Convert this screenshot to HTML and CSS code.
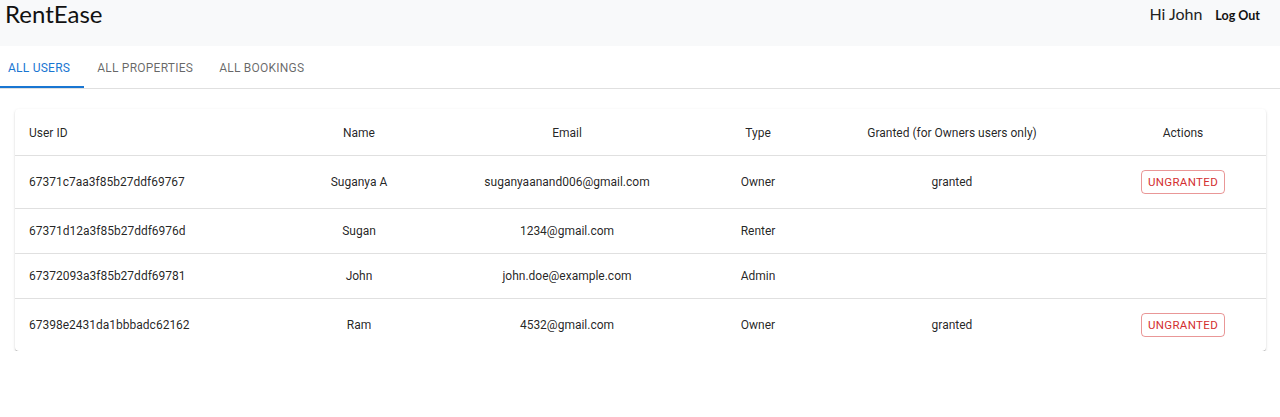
FILE: index.html
```html
<!DOCTYPE html>
<html>
<head>
<meta charset="utf-8">
<link rel="stylesheet" href="styles.css">
</head>
<body>
<header class="navbar">
  <div class="brand">RentEase</div>
  <div class="nav-right">
    <span class="greet">Hi John</span>
    <span class="logout">Log Out</span>
  </div>
</header>
<nav class="tabs">
  <div class="tab active">All Users</div>
  <div class="tab">All Properties</div>
  <div class="tab">All Bookings</div>
</nav>
<main class="content">
  <div class="card">
    <table class="users">
      <colgroup>
        <col class="c1"><col class="c2"><col class="c3"><col class="c4"><col class="c5"><col class="c6">
      </colgroup>
      <thead>
        <tr>
          <th class="left">User ID</th>
          <th>Name</th>
          <th>Email</th>
          <th>Type</th>
          <th>Granted (for Owners users only)</th>
          <th>Actions</th>
        </tr>
      </thead>
      <tbody>
        <tr>
          <td class="left">67371c7aa3f85b27ddf69767</td>
          <td>Suganya A</td>
          <td>suganyaanand006@gmail.com</td>
          <td>Owner</td>
          <td>granted</td>
          <td><button class="btn-ungrant">Ungranted</button></td>
        </tr>
        <tr>
          <td class="left">67371d12a3f85b27ddf6976d</td>
          <td>Sugan</td>
          <td>1234@gmail.com</td>
          <td>Renter</td>
          <td></td>
          <td></td>
        </tr>
        <tr>
          <td class="left">67372093a3f85b27ddf69781</td>
          <td>John</td>
          <td>john.doe@example.com</td>
          <td>Admin</td>
          <td></td>
          <td></td>
        </tr>
        <tr class="last">
          <td class="left">67398e2431da1bbbadc62162</td>
          <td>Ram</td>
          <td>4532@gmail.com</td>
          <td>Owner</td>
          <td>granted</td>
          <td><button class="btn-ungrant">Ungranted</button></td>
        </tr>
      </tbody>
    </table>
  </div>
</main>
</body>
</html>
```
FILE: styles.css
```css
* { box-sizing: border-box; }
html, body { margin: 0; padding: 0; background: #fff; }
body { font-family: Roboto, "Liberation Sans", sans-serif; color: rgba(0,0,0,0.87); }

.navbar {
  height: 46px;
  background: #f8f9fa;
  display: flex;
  align-items: flex-start;
  justify-content: space-between;
  padding: 0 20px 0 5px;
}
.brand {
  font-family: Lato, "Open Sans", sans-serif;
  font-size: 24px;
  line-height: 28px;
  color: #111;
}
.nav-right {
  display: flex;
  align-items: baseline;
  gap: 13px;
  padding-top: 4px;
}
.greet {
  font-family: Lato, sans-serif;
  font-size: 16px;
  color: #222;
}
.logout {
  font-family: Lato, sans-serif;
  font-size: 12.5px;
  font-weight: 700;
  color: #111;
}

.tabs {
  display: flex;
  height: 43px;
  border-bottom: 1px solid #e0e0e0;
}
.tab {
  display: flex;
  align-items: center;
  padding: 2px 13px 0;
  font-size: 12px;
  font-weight: 400;
  text-transform: uppercase;
  letter-spacing: 0.02em;
  color: rgba(0,0,0,0.6);
}
.tab:first-child { padding-left: 8px; padding-right: 14px; }
.tab.active {
  color: #1976d2;
  box-shadow: inset 0 -2px 0 #1976d2;
}

.content { padding: 20px 14px 0 15px; }
.card {
  background: #fff;
  border-radius: 4px;
  box-shadow: 0 2px 1px -1px rgba(0,0,0,0.22), 0 1px 1px 0 rgba(0,0,0,0.16), 0 1px 3px 0 rgba(0,0,0,0.12);
  overflow: hidden;
}
.users {
  width: 100%;
  border-collapse: collapse;
  table-layout: fixed;
  font-size: 12px;
}
.c1 { width: 281px; }
.c2 { width: 126px; }
.c3 { width: 290px; }
.c4 { width: 92px; }
.c5 { width: 296px; }
.c6 { width: 166px; }

.users th, .users td {
  text-align: center;
  line-height: 16px;
  padding: 14px 8px;
  border-bottom: 1px solid #e0e0e0;
  font-weight: 400;
  color: rgba(0,0,0,0.87);
  white-space: nowrap;
}
.users th { padding-top: 16px; padding-bottom: 14px; }
.users .left { text-align: left; padding-left: 14px; }
.users tr.last td { border-bottom: none; }

.btn-ungrant {
  font-family: Roboto, sans-serif;
  font-size: 11.5px;
  font-weight: 400;
  letter-spacing: 0.03em;
  text-transform: uppercase;
  color: #d32f2f;
  background: transparent;
  border: 1px solid rgba(211,47,47,0.5);
  border-radius: 4px;
  height: 24px;
  width: 84px;
  padding: 0;
  line-height: 22px;
  vertical-align: middle;
}
```
